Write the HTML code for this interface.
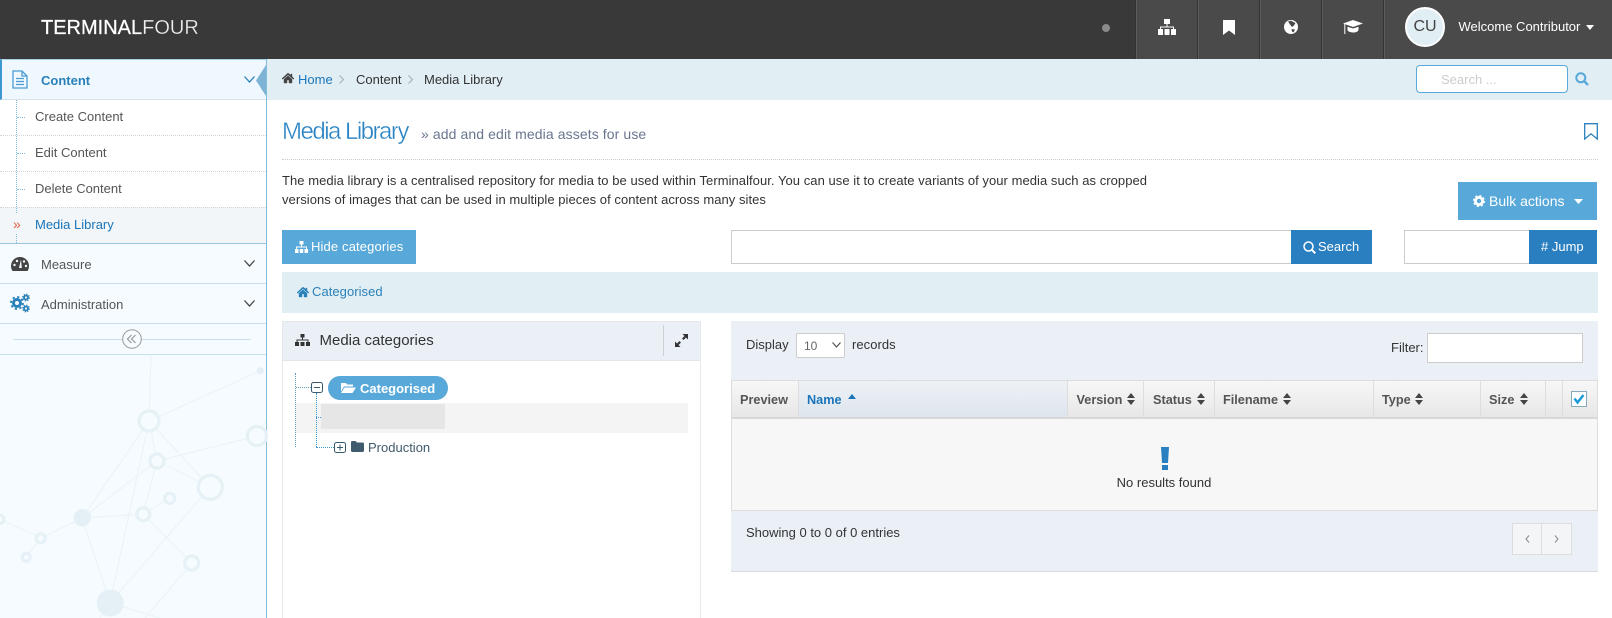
<!DOCTYPE html>
<html><head><meta charset="utf-8"><style>
*{box-sizing:border-box}
html,body{margin:0;padding:0;width:1612px;height:618px;overflow:hidden;background:#fff}
body{font-family:"Liberation Sans",sans-serif;font-size:13px;color:#333;position:relative}
.a{position:absolute}
.t{position:absolute;white-space:nowrap;line-height:20px;height:20px}
svg{position:absolute;overflow:visible}
.th{position:absolute;top:380px;height:39px;border-right:1px solid #ddd;border-top:1px solid #ddd;background:linear-gradient(#f7f7f7,#e6e6e6)}
.h{position:absolute;top:390px;line-height:20px;font-weight:bold;font-size:12.7px;color:#555;white-space:nowrap}
.nd{position:absolute;left:0;width:266px;height:1px;border-top:1px dotted #d4d4d4}
.dv{position:absolute;top:0;width:2px;height:59px;background:#333;border-right:1px solid #5c5c5c}
</style></head><body>

<!-- sidebar -->
<div class="a" style="left:0;top:59px;width:267px;height:559px;background:#f5fbfe;border-right:1px solid #85bcdc"></div>
<svg style="left:0;top:0" width="266" height="618" fill="none" stroke="#eaf4f9" stroke-width="1.2">
<path d="M151 354L149 421M149 421L260 371M149 421L157 461M149 421L82 518M149 421L110 603M149 421L210 487M157 461L257 436M157 461L210 487M157 461L82 518M157 461L143 514M143 514L170 498M143 514L82 518M143 514L192 563M82 518L41 538M41 538L26 557M41 538L0 519M82 518L110 603M210 487L110 603M192 563L145 618M110 603L160 618M110 603L100 618M257 436L266 421"/>
<g fill="#f5fbfe" stroke="#e6f1f7" stroke-width="3.2"><circle cx="149" cy="421" r="10"/><circle cx="257" cy="436" r="9.500"/><circle cx="157" cy="461" r="7"/><circle cx="210.300" cy="487.300" r="12"/><circle cx="169.700" cy="498.300" r="5"/><circle cx="143.300" cy="514.300" r="6.500"/><circle cx="40.700" cy="538.300" r="4.500"/><circle cx="26.300" cy="557.300" r="4"/><circle cx="191.700" cy="563" r="7"/><circle cx="0" cy="519.300" r="4"/></g>
<g fill="#e4f0f6" stroke="none"><circle cx="82.300" cy="517.700" r="8.700"/><circle cx="110.300" cy="603" r="13.500"/><circle cx="260.300" cy="370.700" r="3.500"/></g>
</svg>

<!-- content row -->
<div class="a" style="left:0;top:59px;width:265.500px;height:41px;background:#eff8fe;border-left:2px solid #3f97cf;border-bottom:1px solid #d5e2ea;border-top:1px solid #a5d0e8"></div>
<svg style="left:12px;top:70px" width="16" height="19" fill="none" stroke="#4a9bd4" stroke-width="1.300"><path d="M1 1h9l5 5v12H1zM10 1v5h5"/><path d="M4 8.500h8M4 11.500h8M4 14.500h8" stroke-width="1.200"/></svg>
<div class="t" style="left:41px;top:71px;font-weight:bold;color:#2a80b9">Content</div>
<svg style="left:244px;top:76px" width="11" height="7" fill="none" stroke="#2a80b9" stroke-width="1.300"><path d="M.5.5L5.500 6 10.500 .5"/></svg>
<svg style="left:256px;top:65px" width="10" height="31"><path d="M10 0V31L0 15.500z" fill="#7fb3d5"/></svg>

<!-- sub menu -->
<div class="a" style="left:0;top:100px;width:265.500px;height:143px;background:#fff"></div>
<div class="a" style="left:0;top:207px;width:265.500px;height:36px;background:#f2f6f8"></div>
<div class="nd" style="top:135px"></div><div class="nd" style="top:171px"></div><div class="nd" style="top:207px"></div>
<div class="a" style="left:16px;top:100px;height:143px;border-left:1px dotted #7fb9dc"></div>
<div class="a" style="left:17px;top:117px;width:8px;border-top:1px dotted #7fb9dc"></div>
<div class="a" style="left:17px;top:153px;width:8px;border-top:1px dotted #7fb9dc"></div>
<div class="a" style="left:17px;top:189px;width:8px;border-top:1px dotted #7fb9dc"></div>
<div class="t" style="left:35px;top:107px;color:#555">Create Content</div>
<div class="t" style="left:35px;top:143px;color:#555">Edit Content</div>
<div class="t" style="left:35px;top:179px;color:#555">Delete Content</div>
<div class="t" style="left:35px;top:215px;color:#1a75ba">Media Library</div>
<div class="t" style="left:13px;top:214px;color:#e2603f;font-size:14px;background:#f2f6f8;line-height:20px">»</div>

<div class="a" style="left:0;top:243px;width:265.500px;height:1px;background:#9cc5de"></div>
<div class="a" style="left:0;top:283px;width:265.500px;height:1px;background:#c6e0ee"></div>
<div class="a" style="left:0;top:323px;width:265.500px;height:1px;background:#c6e0ee"></div>
<div class="a" style="left:0;top:354px;width:265.500px;height:1px;background:#c6e0ee"></div>
<svg style="left:11px;top:257px" width="18" height="14"><path d="M9 0A9 9 0 0 0 0 9c0 2 .6 3.700 1.500 5h15c.9-1.300 1.500-3 1.500-5a9 9 0 0 0-9-9z" fill="#444"/><g fill="#f5fbfe"><circle cx="3.500" cy="8" r="1.200"/><circle cx="6" cy="4" r="1.200"/><circle cx="13" cy="4.500" r="1.200"/><circle cx="15" cy="9" r="1.200"/><path d="M10 2.500l.8 8.500-2.800 0z"/></g></svg>
<div class="t" style="left:41px;top:255px;color:#555">Measure</div>
<svg style="left:244px;top:260px" width="11" height="7" fill="none" stroke="#444" stroke-width="1.300"><path d="M.5.5L5.500 6 10.500.5"/></svg>
<svg style="left:10px;top:293px" width="20" height="20" fill="none" stroke="#2a80b9"><circle cx="7" cy="10" r="3.500" stroke-width="3"/><circle cx="7" cy="10" r="6" stroke-width="1.800" stroke-dasharray="2.200 2.500"/><circle cx="16" cy="4.500" r="2" stroke-width="1.800"/><circle cx="16" cy="4.500" r="3.300" stroke-width="1.200" stroke-dasharray="1.300 1.300"/><circle cx="16" cy="15.500" r="2" stroke-width="1.800"/><circle cx="16" cy="15.500" r="3.300" stroke-width="1.200" stroke-dasharray="1.300 1.300"/></svg>
<div class="t" style="left:41px;top:295px;color:#555">Administration</div>
<svg style="left:244px;top:300px" width="11" height="7" fill="none" stroke="#444" stroke-width="1.300"><path d="M.5.5L5.500 6 10.500.5"/></svg>
<div class="a" style="left:13px;top:339px;width:238px;height:1px;background:#c6e0ee"></div>
<svg style="left:122px;top:329px" width="20" height="20" fill="#f5fbfe" stroke="#999"><circle cx="10" cy="10" r="9.300"/><path d="M9.500 6L5.500 10l4 4M13.500 6L9.500 10l4 4" fill="none" stroke-width="1.200"/></svg>

<!-- header -->
<div class="a" style="left:0;top:0;width:1612px;height:59px;background:#393939"></div>
<div class="a" style="left:1136px;top:0;width:476px;height:59px;background:#4a4a4a"></div>
<div class="dv" style="left:1135px"></div><div class="dv" style="left:1197px"></div><div class="dv" style="left:1259px"></div><div class="dv" style="left:1321px"></div><div class="dv" style="left:1383px"></div>
<div class="t" style="left:41px;top:18px;font-size:20px;color:#fff"><span style="-webkit-text-stroke:.25px #fff">TERMINAL</span><span style="color:#eee;-webkit-text-stroke:.25px #393939">FOUR</span></div>
<div class="a" style="left:1102px;top:24px;width:8px;height:8px;border-radius:50%;background:#8a8a8a"></div>
<svg style="left:1158px;top:19px" width="18" height="16" fill="#fff"><rect x="6" y="0" width="6" height="5"/><rect x="0" y="10" width="5" height="6" rx=".5"/><rect x="6.500" y="10" width="5" height="6" rx=".5"/><rect x="13" y="10" width="5" height="6" rx=".5"/><path d="M8.500 5h1v2.500h6.500V10h-1V8.500H3V10H2V7.500h6.500z"/></svg>
<svg style="left:1223px;top:20px" width="12" height="15"><path d="M0 0h12v15L6 10.500 0 15z" fill="#fff"/></svg>
<svg style="left:1284px;top:20px" width="14" height="14"><circle cx="7" cy="7" r="7" fill="#fff"/><path d="M4 1.500L7 .8 11.500 3 10 5.500 8 7 6 4.500zM7.500 9l3.500.5L9.500 12.500 8 11.500z" fill="#4a4a4a"/></svg>
<svg style="left:1343px;top:20px" width="20" height="15" fill="#fff"><path d="M10 0L20 3.500 10 7 0 3.500z"/><path d="M4.500 6.800L10 8.500l5.500-1.700v3c0 1.700-3 3-5.500 2.700-2.500 0-5.500-1-5.500-2.700z"/><rect x="1.300" y="4" width="1" height="10"/></svg>
<div class="a" style="left:1405px;top:7px;width:40px;height:40px;border-radius:50%;background:#e1eef4;border:2px solid #fff;text-align:center;line-height:36px;font-size:16px;color:#444">CU</div>
<div class="t" style="left:1458.500px;top:17px;color:#fff;font-size:13px">Welcome Contributor</div>
<svg style="left:1586px;top:25px" width="8" height="5"><path d="M0 0h8L4 5z" fill="#fff"/></svg>

<!-- breadcrumb -->
<div class="a" style="left:267px;top:59px;width:1345px;height:41px;background:#e1eef4"></div>
<svg style="left:282px;top:73px" width="12" height="10"><path d="M6 0L0 5.500l.8.8L6 1.700l5.200 4.600.8-.8-2-1.900V1H8.800v1.300zM2 6.300V10h3V7h2v3h3V6.300L6 2.800z" fill="#444" stroke="#444" stroke-width=".4"/></svg>
<div class="t" style="left:298px;top:69.500px;color:#1a75ba">Home</div>
<svg style="left:339px;top:75px" width="5" height="9" fill="none" stroke="#aaa"><path d="M.5.5L4.500 4.500.5 8.500"/></svg>
<div class="t" style="left:356px;top:69.500px;color:#333">Content</div>
<svg style="left:408px;top:75px" width="5" height="9" fill="none" stroke="#aaa"><path d="M.5.5L4.500 4.500.5 8.500"/></svg>
<div class="t" style="left:424px;top:69.500px;color:#333">Media Library</div>
<div class="a" style="left:1416px;top:65px;width:152px;height:28px;background:#fff;border:1px solid #58a9d9;border-radius:4px"></div>
<div class="t" style="left:1441px;top:70px;color:#ccc">Search ...</div>
<svg style="left:1575px;top:72px" width="14" height="14" fill="none" stroke="#58a9d9" stroke-width="2"><circle cx="5.800" cy="5.800" r="4.500"/><path d="M9 9l4 4" stroke-width="2.400"/></svg>

<!-- title -->
<div class="t" style="left:282px;top:119px;line-height:26px;height:26px;font-size:24px;letter-spacing:-1.500px;color:#2a84c4;-webkit-text-stroke:.35px #fff">Media Library</div>
<div class="t" style="left:421px;top:124px;font-size:14px;letter-spacing:.1px;color:#68758f">» add and edit media assets for use</div>
<svg style="left:1584px;top:123px" width="14" height="17" fill="none" stroke="#2a80c0" stroke-width="1.300"><path d="M.7.7h12.600v15.300L7 10.800.7 16z"/></svg>
<div class="a" style="left:282px;top:159px;width:1316px;border-top:1px dotted #ccc"></div>
<div class="t" style="left:282px;top:171px;color:#333;letter-spacing:.05px">The media library is a centralised repository for media to be used within Terminalfour. You can use it to create variants of your media such as cropped</div>
<div class="t" style="left:282px;top:190px;color:#333;letter-spacing:.05px">versions of images that can be used in multiple pieces of content across many sites</div>

<!-- buttons -->
<div class="a" style="left:1458px;top:182px;width:139px;height:38px;background:#58a9d9"></div>
<svg style="left:1473px;top:195px" width="12" height="12"><circle cx="6" cy="6" r="3.600" fill="none" stroke="#fff" stroke-width="2.800"/><circle cx="6" cy="6" r="5.300" fill="none" stroke="#fff" stroke-width="1.500" stroke-dasharray="2 2.200"/></svg>
<div class="t" style="left:1489px;top:191px;color:#fff;font-size:14px">Bulk actions</div>
<svg style="left:1574px;top:199px" width="9" height="5"><path d="M0 0h9L4.500 5z" fill="#fff"/></svg>

<div class="a" style="left:282px;top:230px;width:134px;height:34px;background:#58a9d9"></div>
<svg style="left:295px;top:241px" width="13" height="12" fill="#fff"><rect x="4.500" y="0" width="4" height="3.500"/><rect x="0" y="8" width="3.500" height="4"/><rect x="4.750" y="8" width="3.500" height="4"/><rect x="9.500" y="8" width="3.500" height="4"/><path d="M6 3.500h1v2h5V8h-1V6.500H2V8H1V5.500h5z"/></svg>
<div class="t" style="left:311px;top:237px;color:#fff;letter-spacing:.14px">Hide categories</div>

<div class="a" style="left:731px;top:230px;width:561px;height:34px;background:#fff;border:1px solid #ccc"></div>
<div class="a" style="left:1291px;top:230px;width:81px;height:34px;background:#2a7fc1"></div>
<svg style="left:1303px;top:241px" width="13" height="13" fill="none" stroke="#fff" stroke-width="1.500"><circle cx="5.500" cy="5.500" r="4.500"/><path d="M8.800 8.800l3.500 3.500" stroke-width="2"/></svg>
<div class="t" style="left:1318px;top:237px;color:#fff">Search</div>
<div class="a" style="left:1404px;top:230px;width:126px;height:34px;background:#fff;border:1px solid #ccc"></div>
<div class="a" style="left:1529px;top:230px;width:68px;height:34px;background:#2a7fc1"></div>
<div class="t" style="left:1541px;top:237px;color:#fff">#&nbsp;Jump</div>

<!-- categorised bar -->
<div class="a" style="left:282px;top:272px;width:1316px;height:41px;background:#e1eef4"></div>
<svg style="left:297px;top:287px" width="12" height="10"><path d="M6 0L0 5.500l.8.8L6 1.700l5.200 4.600.8-.8-2-1.900V1H8.800v1.300zM2 6.300V10h3V7h2v3h3V6.300L6 2.800z" fill="#2a80b9" stroke="#2a80b9" stroke-width=".4"/></svg>
<div class="t" style="left:312px;top:282px;color:#2a80b9;letter-spacing:.05px">Categorised</div>

<!-- media categories -->
<div class="a" style="left:282px;top:321px;width:419px;height:297px;background:#fff;border:1px solid #e6e9ec;border-bottom:0"></div>
<div class="a" style="left:283px;top:322px;width:417px;height:39px;background:#ebf0f7;border-bottom:1px solid #e2e5e9"></div>
<svg style="left:295px;top:334px" width="15" height="12" fill="#333"><rect x="5.500" y="0" width="4" height="3.500"/><rect x="0" y="8" width="4" height="4"/><rect x="5.500" y="8" width="4" height="4"/><rect x="11" y="8" width="4" height="4"/><path d="M7 3.500h1v2h5.500V8h-1V6.500h-10V8h-1V5.500H7z"/></svg>
<div class="t" style="left:319.500px;top:331px;font-size:15px;color:#333">Media categories</div>
<div class="a" style="left:663px;top:325px;width:1px;height:31px;background:#cdd0d4"></div>
<svg style="left:675px;top:334px" width="13" height="13" fill="#333"><path d="M13 0v5.500L11 3.500 8.500 6 7 4.500 9.500 2 7.500 0zM0 13V7.500L2 9.500 4.500 7 6 8.500 3.500 11 5.500 13z"/></svg>

<div class="a" style="left:296px;top:403px;width:392px;height:30px;background:#f4f4f4"></div>
<div class="a" style="left:321px;top:404px;width:124px;height:25px;background:#e6e6e6"></div>
<div class="a" style="left:295px;top:373px;height:74px;border-left:1px dotted #5f97ae"></div>
<div class="a" style="left:296px;top:387px;width:15px;border-top:1px dotted #5f97ae"></div>
<div class="a" style="left:316px;top:393px;height:54px;border-left:1px dotted #3f97cf"></div>
<div class="a" style="left:316px;top:417px;width:5px;border-top:1px dotted #3f97cf"></div>
<div class="a" style="left:316px;top:447px;width:18px;border-top:1px dotted #3f97cf"></div>
<svg style="left:311px;top:382px" width="12" height="11" fill="#fff" stroke="#3a5a6d"><rect x=".5" y=".5" width="11" height="10" rx="2"/><path d="M3 5.500h6"/></svg>
<div class="a" style="left:328px;top:376px;width:120px;height:24px;border-radius:12px;background:#58a9d9"></div>
<svg style="left:341px;top:382px" width="15" height="11" fill="#fff"><path d="M0 1h5l1 1.500h6V4.500H3L0 9.500zM3.500 5.500H15L11.500 11H0z"/></svg>
<div class="t" style="left:360px;top:379px;font-weight:bold;color:#fff">Categorised</div>
<svg style="left:334px;top:442px" width="12" height="11" fill="#fff" stroke="#3a5a6d"><rect x=".5" y=".5" width="11" height="10" rx="2"/><path d="M3 5.500h6M6 2.500v6"/></svg>
<svg style="left:351px;top:441px" width="13" height="11"><path d="M0 1.500A1.500 1.500 0 0 1 1.500 0h3L6 1.500h5.500A1.500 1.500 0 0 1 13 3v6.500A1.500 1.500 0 0 1 11.500 11h-10A1.500 1.500 0 0 1 0 9.500z" fill="#3f5c6e"/></svg>
<div class="t" style="left:368px;top:438px;color:#3f5a6b">Production</div>

<!-- table panel -->
<div class="a" style="left:731px;top:321px;width:867px;height:251px;background:#ebf0f7;border-bottom:1px solid #d8dadd"></div>
<div class="t" style="left:746px;top:335px">Display</div>
<div class="a" style="left:796px;top:333px;width:49px;height:25px;background:#fff;border:1px solid #ccc;border-radius:2px"></div>
<div class="t" style="left:804px;top:336px;color:#666;font-size:12px">10</div>
<svg style="left:832px;top:342px" width="9" height="6" fill="none" stroke="#555" stroke-width="1.200"><path d="M.5.5L4.500 5 8.500.5"/></svg>
<div class="t" style="left:852px;top:335px;letter-spacing:.05px">records</div>
<div class="t" style="left:1391px;top:338px">Filter:</div>
<div class="a" style="left:1427px;top:333px;width:156px;height:30px;background:#fff;border:1px solid #ccc"></div>

<div class="th" style="left:731px;width:68px;border-left:1px solid #ddd"></div>
<div class="th" style="left:799px;width:269px;background:linear-gradient(#eef2f7,#dde4ec)"></div>
<div class="th" style="left:1068px;width:76px"></div>
<div class="th" style="left:1144px;width:71px"></div>
<div class="th" style="left:1215px;width:159px"></div>
<div class="th" style="left:1374px;width:107px"></div>
<div class="th" style="left:1481px;width:65px"></div>
<div class="th" style="left:1546px;width:17px"></div>
<div class="th" style="left:1563px;width:35px"></div>
<div class="a" style="left:731px;top:417px;width:867px;height:2px;background:#d8d8d8"></div>
<div class="h" style="left:740px">Preview</div>
<div class="h" style="left:807px;color:#1a75ba">Name</div>
<div class="h" style="left:1076.500px">Version</div>
<div class="h" style="left:1153px">Status</div>
<div class="h" style="left:1223px">Filename</div>
<div class="h" style="left:1382px">Type</div>
<div class="h" style="left:1489px">Size</div>
<svg style="left:848px;top:394px" width="8" height="5"><path d="M0 5L4 0l4 5z" fill="#1a75ba"/></svg>
<svg style="left:1127px;top:393px" width="8" height="12" fill="#444"><path d="M0 5L4 0l4 5zM0 7l4 5 4-5z"/></svg>
<svg style="left:1197px;top:393px" width="8" height="12" fill="#444"><path d="M0 5L4 0l4 5zM0 7l4 5 4-5z"/></svg>
<svg style="left:1283px;top:393px" width="8" height="12" fill="#444"><path d="M0 5L4 0l4 5zM0 7l4 5 4-5z"/></svg>
<svg style="left:1415px;top:393px" width="8" height="12" fill="#444"><path d="M0 5L4 0l4 5zM0 7l4 5 4-5z"/></svg>
<svg style="left:1519.500px;top:393px" width="8" height="12" fill="#444"><path d="M0 5L4 0l4 5zM0 7l4 5 4-5z"/></svg>
<svg style="left:1571px;top:391px" width="16" height="16"><rect x=".5" y=".5" width="15" height="15" fill="#fff" stroke="#86a9bb"/><path d="M3.500 7.500l3 4L12.500 4" fill="none" stroke="#1a9ad6" stroke-width="2.400"/></svg>

<div class="a" style="left:731px;top:419px;width:867px;height:92px;background:#f7f7f7;border:1px solid #ddd;border-top:0"></div>
<svg style="left:1161px;top:447px" width="8" height="23" fill="#2a7fc1"><path d="M0 0h8L7 16H1z"/><rect x="1" y="18" width="6" height="5"/></svg>
<div class="t" style="left:1064px;top:473px;width:200px;text-align:center">No results found</div>
<div class="t" style="left:746px;top:523px">Showing 0 to 0 of 0 entries</div>
<div class="a" style="left:1512px;top:523px;width:60px;height:32px;background:#f4f5f6;border:1px solid #ddd"></div>
<div class="a" style="left:1541px;top:523px;width:1px;height:32px;background:#ddd"></div>
<svg style="left:1525px;top:535px" width="5" height="8" fill="none" stroke="#888"><path d="M4 .5L1 4l3 3.500"/></svg>
<svg style="left:1554px;top:535px" width="5" height="8" fill="none" stroke="#888"><path d="M1 .5L4 4 1 7.500"/></svg>
</body></html>
